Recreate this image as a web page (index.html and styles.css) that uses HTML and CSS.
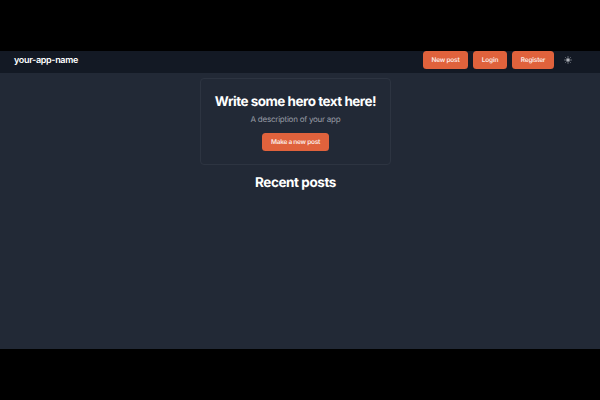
FILE: index.html
```html
<!DOCTYPE html>
<html lang="en">
<head>
<meta charset="utf-8">
<title>your-app-name</title>
<link rel="stylesheet" href="styles.css">
</head>
<body>
<div class="app">
  <header class="navbar">
    <a class="brand">your-app-name</a>
    <nav class="actions">
      <button class="btn btn-post">New post</button>
      <button class="btn btn-login">Login</button>
      <button class="btn btn-register">Register</button>
      <svg class="sun" viewBox="0 0 8 8" aria-hidden="true">
        <circle cx="4" cy="4" r="1.8" fill="#b4b7bd"/>
        <path d="M4 .5v1M4 6.5v1M.5 4h1M6.5 4h1M1.5 1.5l.7.7M5.8 5.8l.7.7M6.5 1.5l-.7.7M2.2 5.8l-.7.7" stroke="#80858f" stroke-width=".8" stroke-linecap="round"/>
      </svg>
    </nav>
  </header>
  <main class="content">
    <section class="hero">
      <h1 class="hero-title">Write some hero text here!</h1>
      <p class="hero-text">A description of your app</p>
      <button class="btn btn-hero">Make a new post</button>
    </section>
    <h2 class="recent">Recent posts</h2>
  </main>
</div>
</body>
</html>
```
FILE: styles.css
```css
* {
  box-sizing: border-box;
}

body {
  margin: 0;
  height: 400px;
  padding: 51px 0;
  background: #000;
  color: #fff;
  font-family: Inter, sans-serif;
  text-rendering: geometricPrecision;
}

.app {
  height: 298px;
  background: #222936;
}

.navbar {
  display: flex;
  align-items: flex-start;
  justify-content: space-between;
  height: 22px;
  padding: 0 28px 0 14px;
  background: #131924;
}

.brand {
  font-size: 9px;
  font-weight: 600;
  line-height: 19px;
  letter-spacing: -0.33px;
}

.actions {
  display: flex;
  align-items: center;
  gap: 5px;
}

.btn {
  height: 18px;
  padding: 1px 0 0;
  border: 0;
  border-radius: 3.5px;
  background: #e0623c;
  color: #fbeae5;
  font: 600 6.5px/17px Inter, sans-serif;
  letter-spacing: -0.25px;
  text-align: center;
  text-rendering: geometricPrecision;
}

.btn-post {
  width: 45px;
}

.btn-login {
  width: 34px;
}

.btn-register {
  width: 42px;
}

.btn-post,
.btn-login,
.btn-register {
  letter-spacing: -0.2px;
}

.sun {
  width: 8px;
  height: 8px;
  margin-left: 5px;
}

.content {
  display: flex;
  flex-direction: column;
  align-items: center;
  padding: 5px 9px 0 0;
}

.hero {
  display: flex;
  flex-direction: column;
  align-items: center;
  width: 191px;
  height: 87px;
  padding-top: 14px;
  border: 1px solid #2d3441;
  border-radius: 4px;
}

.hero-title,
.recent {
  margin: 0;
  height: 16px;
  font-size: 13.5px;
  font-weight: 700;
  line-height: 18px;
  letter-spacing: -0.5px;
  white-space: nowrap;
}

.hero-text {
  margin: 3px 0 8px;
  color: #989ca5;
  font-size: 8px;
  line-height: 14px;
  height: 13px;
  letter-spacing: -0.24px;
}

.btn-hero {
  width: 67px;
}

.recent {
  margin-top: 9px;
  letter-spacing: -0.42px;
}
```
